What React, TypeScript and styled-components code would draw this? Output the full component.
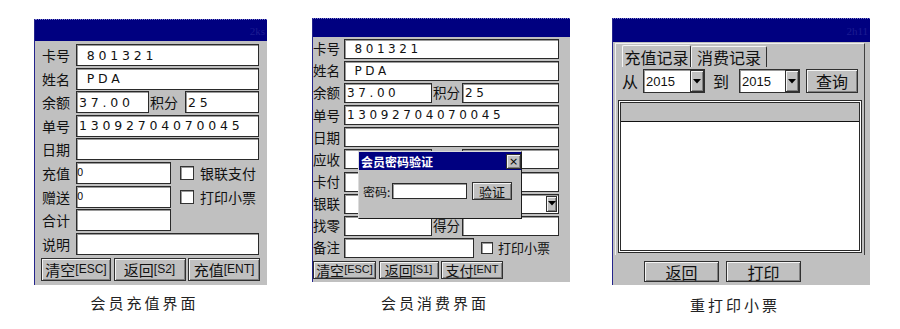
import React from "react";
import styled, { createGlobalStyle } from "styled-components";

const CJK = `"Noto Sans CJK SC", "DejaVu Sans", sans-serif`;

const GlobalStyle = createGlobalStyle`
  html, body { margin: 0; padding: 0; background: #fff; }
  body { font-family: ${CJK}; color: #000; }
  * { box-sizing: border-box; }
`;

const Page = styled.div`
  width: 900px;
  height: 329px;
  display: flex;
  align-items: flex-start;
  padding-left: 34px;
  overflow: hidden;
  background: #fff;
`;

const Figure = styled.figure<{ $w: number; $top: number; $after: number }>`
  margin: ${(p) => p.$top}px ${(p) => p.$after}px 0 0;
  width: ${(p) => p.$w}px;
  flex: none;
  display: flex;
  flex-direction: column;
  align-items: center;
`;

const Screen = styled.div<{ $h: number }>`
  position: relative;
  width: 100%;
  height: ${(p) => p.$h}px;
  background: #c0c0c0;
  border-left: 1px solid #24248c;
  display: flex;
  flex-direction: column;
  overflow: hidden;
`;

const TitleBar = styled.div<{ $h: number }>`
  height: ${(p) => p.$h}px;
  flex: none;
  background: #000080;
  border-top: 1px dotted #7878cc;
  display: flex;
  justify-content: flex-end;
  align-items: center;
  padding-right: 2px;
`;

const Clock = styled.span`
  font: 11px "Liberation Serif", serif;
  color: #1c1c92;
`;

const Caption = styled.figcaption<{ $gap: number }>`
  margin-top: ${(p) => p.$gap}px;
  padding-right: 12px;
  font-family: ${CJK};
  font-size: 15px;
  line-height: 18px;
  letter-spacing: 3px;
  color: #222;
  white-space: nowrap;
`;

const Form = styled.div<{ $pt: number; $pr: number; $gap: number }>`
  display: flex;
  flex-direction: column;
  gap: ${(p) => p.$gap}px;
  padding: ${(p) => p.$pt}px ${(p) => p.$pr}px 0 0;
`;

const Row = styled.div<{ $h: number }>`
  display: flex;
  align-items: stretch;
  height: ${(p) => p.$h}px;
`;

const Label = styled.span<{ $w: number; $pl: number; $size: number }>`
  flex: none;
  width: ${(p) => p.$w}px;
  padding-left: ${(p) => p.$pl}px;
  display: flex;
  align-items: center;
  font-family: ${CJK};
  font-size: ${(p) => p.$size}px;
  line-height: 1;
  white-space: nowrap;
  color: #111;
`;

const Field = styled.div<{ $w?: number; $size?: number; $sp?: number }>`
  ${(p) => (p.$w ? `width:${p.$w}px; flex:none;` : `flex:1;`)}
  min-width: 0;
  position: relative;
  background: #fff;
  border: 1px solid #2a2a2a;
  box-shadow: inset 1px 1px 0 #9a9a9a;
  display: flex;
  align-items: center;
  padding-left: 2px;
  font-family: "DejaVu Sans", sans-serif;
  font-size: ${(p) => p.$size ?? 12.5}px;
  letter-spacing: ${(p) => p.$sp ?? 3.8}px;
  white-space: pre;
  overflow: hidden;
  color: #111;
`;

const TinyZero = styled.span`
  font-family: "DejaVu Sans", sans-serif;
  font-size: 10px;
  letter-spacing: 0;
  margin-left: -2px;
`;

const CheckItem = styled.div<{ $ml: number; $size: number; $gap: number }>`
  display: flex;
  align-items: center;
  gap: ${(p) => p.$gap}px;
  margin-left: ${(p) => p.$ml}px;
  font-family: ${CJK};
  font-size: ${(p) => p.$size}px;
  white-space: nowrap;
  color: #111;
`;

const Check = styled.span<{ $s: number }>`
  flex: none;
  width: ${(p) => p.$s}px;
  height: ${(p) => p.$s}px;
  background: #fff;
  border: 1px solid #333;
  box-shadow: inset 1px 1px 0 #9a9a9a;
`;

const ButtonRow = styled.div<{ $mt: number; $pl: number; $gap: number; $h: number }>`
  display: flex;
  gap: ${(p) => p.$gap}px;
  padding-left: ${(p) => p.$pl}px;
  margin-top: ${(p) => p.$mt}px;
  height: ${(p) => p.$h}px;
`;

const Key = styled.button<{ $w: number; $size: number }>`
  width: ${(p) => p.$w}px;
  height: 100%;
  flex: none;
  padding: 0;
  margin: 0;
  background: #c0c0c0;
  border: 1px solid #303030;
  box-shadow: inset 1px 1px 0 #f4f4f4, inset -1px -1px 0 #808080;
  font-family: ${CJK};
  font-size: ${(p) => p.$size}px;
  font-weight: 400;
  line-height: 1;
  color: #111;
  display: flex;
  align-items: center;
  justify-content: center;
  white-space: nowrap;
`;

const KeyHint = styled.span<{ $size: number }>`
  font-family: "Liberation Sans", sans-serif;
  font-size: ${(p) => p.$size}px;
`;

const DropButton = styled.span<{ $w: number; $inset?: boolean }>`
  flex: none;
  width: ${(p) => p.$w}px;
  align-self: stretch;
  margin: ${(p) => (p.$inset ? "1px 1px 1px auto" : "0 0 0 auto")};
  background: #c0c0c0;
  border: 1px solid #303030;
  box-shadow: inset 1px 1px 0 #f4f4f4, inset -1px -1px 0 #808080;
  display: flex;
  align-items: center;
  justify-content: center;
`;

const Arrow = () => (
  <svg width="8" height="5" viewBox="0 0 8 5">
    <polygon points="0,0 8,0 4,4.5" fill="#000" />
  </svg>
);

/* ---- dialog ---- */
const Dialog = styled.div`
  position: absolute;
  left: 45px;
  top: 133px;
  width: 164px;
  height: 68px;
  background: #c0c0c0;
  border: 1px solid;
  border-color: #dcdcdc #1c1c1c #1c1c1c #dcdcdc;
  display: flex;
  flex-direction: column;
`;

const DialogTitle = styled.div`
  height: 18px;
  flex: none;
  background: #000080;
  color: #fff;
  font-family: ${CJK};
  font-weight: 700;
  font-size: 12px;
  display: flex;
  align-items: center;
  justify-content: space-between;
  padding-left: 2px;
`;

const CloseBox = styled.span`
  width: 15px;
  height: 15px;
  background: #c0c0c0;
  border: 1px solid #303030;
  box-shadow: inset 1px 1px 0 #f4f4f4, inset -1px -1px 0 #808080;
  color: #000;
  font-family: "DejaVu Sans", sans-serif;
  font-size: 11px;
  font-weight: 400;
  display: flex;
  align-items: center;
  justify-content: center;
`;

const DialogBody = styled.div`
  display: flex;
  align-items: center;
  padding: 12px 0 0 4px;
`;

const DialogLabel = styled.span`
  font-family: ${CJK};
  font-size: 12px;
  width: 29px;
  color: #111;
`;

const DialogInput = styled.span`
  width: 75px;
  height: 16px;
  background: #fff;
  border: 1px solid #2a2a2a;
  box-shadow: inset 1px 1px 0 #9a9a9a;
`;

const DialogButton = styled(Key)`
  height: 18px;
  margin-left: 5px;
`;

/* ---- screen 3 ---- */
const Panel = styled.div`
  margin: 1px 5px 0 2px;
  border-top: 1px solid #f0f0f0;
  border-left: 1px solid #f0f0f0;
  border-right: 1px solid #404040;
  padding: 1px 0 2px 0;
  display: flex;
  flex-direction: column;
`;

const TabStrip = styled.div`
  display: flex;
  height: 22px;
  padding-left: 6px;
`;

const Tab = styled.span<{ $w: number; $active?: boolean }>`
  width: ${(p) => p.$w}px;
  border: 1px solid;
  border-bottom: none;
  border-color: #f4f4f4 #303030 transparent #f4f4f4;
  border-radius: 2px 2px 0 0;
  font-family: ${CJK};
  font-size: 16px;
  line-height: 1;
  display: flex;
  align-items: center;
  justify-content: center;
  color: #111;
  ${(p) => (p.$active ? "" : "margin-top: 1px;")}
`;

const Tools = styled.div`
  display: flex;
  align-items: stretch;
  height: 24px;
  margin-top: 2px;
  padding-left: 6px;
`;

const ToolLabel = styled.span<{ $w: number; $ml?: number }>`
  width: ${(p) => p.$w}px;
  margin-left: ${(p) => p.$ml ?? 0}px;
  flex: none;
  font-family: ${CJK};
  font-size: 16px;
  display: flex;
  align-items: center;
  color: #111;
`;

const Select = styled.div<{ $w: number }>`
  width: ${(p) => p.$w}px;
  flex: none;
  display: flex;
  background: #fff;
  border: 1px solid #303030;
  box-shadow: inset 1px 1px 0 #9a9a9a;
`;

const SelectValue = styled.span`
  flex: 1;
  display: flex;
  align-items: center;
  padding-left: 2px;
  font-family: "Liberation Sans", sans-serif;
  font-size: 13px;
  color: #111;
`;

const QueryButton = styled(Key)`
  margin-left: 6px;
`;

const List = styled.div`
  margin: 7px 2px 0 2px;
  height: 153px;
  border: 3px double #2a2a2a;
  background: #fff;
  display: flex;
  flex-direction: column;
`;

const ListHeader = styled.div`
  height: 19px;
  background: #c0c0c0;
  border-bottom: 1px solid #111;
`;

export default function App() {
  return (
    <>
      <GlobalStyle />
      <Page>
        {/* 会员充值界面 */}
        <Figure $w={233} $top={19} $after={45}>
          <Screen $h={266}>
            <TitleBar $h={22}>
              <Clock>2ks</Clock>
            </TitleBar>
            <Form $pt={3} $pr={8} $gap={1.6}>
              <Row $h={22}>
                <Label $w={41} $pl={7} $size={14}>卡号</Label>
                <Field> 801321</Field>
              </Row>
              <Row $h={22}>
                <Label $w={41} $pl={7} $size={14}>姓名</Label>
                <Field> PDA</Field>
              </Row>
              <Row $h={22}>
                <Label $w={41} $pl={7} $size={14}>余额</Label>
                <Field $w={73}>37.00</Field>
                <Label $w={36} $pl={1} $size={14}>积分</Label>
                <Field>25</Field>
              </Row>
              <Row $h={22}>
                <Label $w={41} $pl={7} $size={14}>单号</Label>
                <Field>13092704070045</Field>
              </Row>
              <Row $h={22}>
                <Label $w={41} $pl={7} $size={14}>日期</Label>
                <Field />
              </Row>
              <Row $h={22}>
                <Label $w={41} $pl={7} $size={14}>充值</Label>
                <Field $w={95}>
                  <TinyZero>0</TinyZero>
                </Field>
                <CheckItem $ml={9} $size={14} $gap={6}>
                  <Check $s={14} />
                  银联支付
                </CheckItem>
              </Row>
              <Row $h={22}>
                <Label $w={41} $pl={7} $size={14}>赠送</Label>
                <Field $w={95}>
                  <TinyZero>0</TinyZero>
                </Field>
                <CheckItem $ml={9} $size={14} $gap={6}>
                  <Check $s={14} />
                  打印小票
                </CheckItem>
              </Row>
              <Row $h={22}>
                <Label $w={41} $pl={7} $size={14}>合计</Label>
                <Field $w={95} />
              </Row>
              <Row $h={22}>
                <Label $w={41} $pl={7} $size={14}>说明</Label>
                <Field />
              </Row>
            </Form>
            <ButtonRow $mt={3} $pl={6} $gap={2.5} $h={23}>
              <Key $w={70} $size={15}>
                清空<KeyHint $size={12}>[ESC]</KeyHint>
              </Key>
              <Key $w={72} $size={15}>
                返回<KeyHint $size={12}>[S2]</KeyHint>
              </Key>
              <Key $w={72} $size={15}>
                充值<KeyHint $size={12}>[ENT]</KeyHint>
              </Key>
            </ButtonRow>
          </Screen>
          <Caption $gap={9}>会员充值界面</Caption>
        </Figure>

        {/* 会员消费界面 */}
        <Figure $w={258} $top={18} $after={42}>
          <Screen $h={264}>
            <TitleBar $h={19} />
            <Form $pt={2} $pr={11} $gap={2.1}>
              <Row $h={20}>
                <Label $w={31} $pl={0} $size={13.5}>卡号</Label>
                <Field $size={12} $sp={3.6}> 801321</Field>
              </Row>
              <Row $h={20}>
                <Label $w={31} $pl={0} $size={13.5}>姓名</Label>
                <Field $size={12} $sp={3.6}> PDA</Field>
              </Row>
              <Row $h={20}>
                <Label $w={31} $pl={0} $size={13.5}>余额</Label>
                <Field $w={88} $size={12} $sp={3.6}>37.00</Field>
                <Label $w={30} $pl={1} $size={13.5}>积分</Label>
                <Field $size={12} $sp={3.6}>25</Field>
              </Row>
              <Row $h={20}>
                <Label $w={31} $pl={0} $size={13.5}>单号</Label>
                <Field $size={12} $sp={3.6}>13092704070045</Field>
              </Row>
              <Row $h={20}>
                <Label $w={31} $pl={0} $size={13.5}>日期</Label>
                <Field />
              </Row>
              <Row $h={20}>
                <Label $w={31} $pl={0} $size={13.5}>应收</Label>
                <Field $w={88} />
                <Label $w={30} $pl={1} $size={13.5}>折扣</Label>
                <Field />
              </Row>
              <Row $h={20}>
                <Label $w={31} $pl={0} $size={13.5}>卡付</Label>
                <Field $w={88} />
                <Label $w={30} $pl={1} $size={13.5}>现金</Label>
                <Field />
              </Row>
              <Row $h={20}>
                <Label $w={31} $pl={0} $size={13.5}>银联</Label>
                <Field>
                  <DropButton $w={11} $inset>
                    <Arrow />
                  </DropButton>
                </Field>
              </Row>
              <Row $h={20}>
                <Label $w={31} $pl={0} $size={13.5}>找零</Label>
                <Field $w={88} />
                <Label $w={30} $pl={1} $size={13.5}>得分</Label>
                <Field />
              </Row>
              <Row $h={20}>
                <Label $w={31} $pl={0} $size={13.5}>备注</Label>
                <Field $w={130} />
                <CheckItem $ml={7} $size={13} $gap={5}>
                  <Check $s={12} />
                  打印小票
                </CheckItem>
              </Row>
            </Form>
            <ButtonRow $mt={3} $pl={0} $gap={2.5} $h={18}>
              <Key $w={63} $size={14}>
                清空<KeyHint $size={11}>[ESC]</KeyHint>
              </Key>
              <Key $w={60} $size={14}>
                返回<KeyHint $size={11}>[S1]</KeyHint>
              </Key>
              <Key $w={62} $size={14}>
                支付<KeyHint $size={11}>[ENT</KeyHint>
              </Key>
            </ButtonRow>
            <Dialog>
              <DialogTitle>
                会员密码验证
                <CloseBox>×</CloseBox>
              </DialogTitle>
              <DialogBody>
                <DialogLabel>密码:</DialogLabel>
                <DialogInput />
                <DialogButton $w={40} $size={13}>验证</DialogButton>
              </DialogBody>
            </Dialog>
          </Screen>
          <Caption $gap={12}>会员消费界面</Caption>
        </Figure>

        {/* 重打印小票 */}
        <Figure $w={258} $top={18} $after={0}>
          <Screen $h={267}>
            <TitleBar $h={24}>
              <Clock>2h11</Clock>
            </TitleBar>
            <Panel>
              <TabStrip>
                <Tab $w={69} $active>充值记录</Tab>
                <Tab $w={76}>消费记录</Tab>
              </TabStrip>
              <Tools>
                <ToolLabel $w={21}>从</ToolLabel>
                <Select $w={62}>
                  <SelectValue>2015</SelectValue>
                  <DropButton $w={14}>
                    <Arrow />
                  </DropButton>
                </Select>
                <ToolLabel $w={26} $ml={8}>到</ToolLabel>
                <Select $w={61}>
                  <SelectValue>2015</SelectValue>
                  <DropButton $w={14}>
                    <Arrow />
                  </DropButton>
                </Select>
                <QueryButton $w={52} $size={16}>查询</QueryButton>
              </Tools>
              <List>
                <ListHeader />
              </List>
            </Panel>
            <ButtonRow $mt={6} $pl={31} $gap={7} $h={21}>
              <Key $w={75} $size={16}>返回</Key>
              <Key $w={75} $size={16}>打印</Key>
            </ButtonRow>
          </Screen>
          <Caption $gap={11}>重打印小票</Caption>
        </Figure>
      </Page>
    </>
  );
}
